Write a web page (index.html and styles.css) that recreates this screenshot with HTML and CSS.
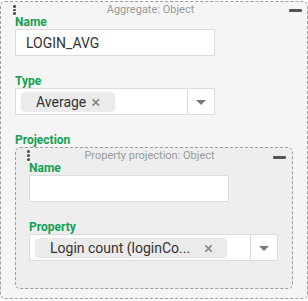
FILE: index.html
```html
<!DOCTYPE html>
<html lang="en">
<head>
    <meta charset="UTF-8">
    <meta name="viewport" content="width=device-width, initial-scale=1.0">
    <title>Aggregate</title>
    <link rel="stylesheet" href="styles.css">
</head>
<body>
    <div class="group">
        <div class="group-head">
            <span class="handle"><i></i><i></i><i></i></span>
            <span class="group-title">Aggregate: Object</span>
            <span class="collapse"></span>
        </div>

        <div class="field">
            <label class="field-label">Name</label>
            <input class="text-input" type="text" value="LOGIN_AVG">
        </div>

        <div class="field">
            <label class="field-label">Type</label>
            <div class="select select-type">
                <div class="select-value">
                    <span class="chip">Average<span class="chip-remove">×</span></span>
                </div>
                <div class="select-arrow"><span class="caret"></span></div>
            </div>
        </div>

        <div class="field field-nested">
            <label class="field-label">Projection</label>
            <!-- vnořený blok projekce -->
            <div class="group group-inner">
                <div class="group-head">
                    <span class="handle"><i></i><i></i><i></i></span>
                    <span class="group-title">Property projection: Object</span>
                    <span class="collapse"></span>
                </div>

                <div class="field">
                    <label class="field-label">Name</label>
                    <input class="text-input" type="text" value="">
                </div>

                <div class="field">
                    <label class="field-label">Property</label>
                    <div class="select select-property">
                        <div class="select-value">
                            <span class="chip chip-wide"><span class="chip-text">Login count (loginCo...</span><span class="chip-remove">×</span></span>
                        </div>
                        <div class="select-arrow"><span class="caret"></span></div>
                    </div>
                </div>
            </div>
        </div>
    </div>
</body>
</html>
```

FILE: styles.css
```css
body {
    margin: 0;
    padding-top: 1px;
    background: #fff;
    font-family: Roboto, "Liberation Sans", Arial, sans-serif;
    color: #333;
}

.group {
    border: 1px dashed #9e9e9e;
    border-radius: 5px;
    background: #f5f5f5;
    padding: 0 14px 9px 14px;
}

.group-inner {
    background: #eeeeee;
    padding: 0 13px 9px 13px;
}

.group-head {
    display: flex;
    height: 13px;
    margin-right: -9px;
}

.group-inner .group-head {
    margin-right: -7px;
}

.handle {
    display: flex;
    flex-direction: column;
    gap: 1px;
    margin: 3px 0 0 -2px;
    position: relative;
    z-index: 1;
}

.group-inner .handle {
    margin-top: 2px;
}

.handle i {
    display: block;
    width: 3px;
    height: 3px;
    border-radius: 50%;
    background: #4a4a4a;
}

.group-title {
    flex: 1;
    text-align: center;
    font-size: 11px;
    line-height: 16px;
    color: #9a9a9a;
    margin-right: 4px;
}

.collapse {
    width: 13px;
    height: 3px;
    margin-top: 7px;
    background: #555;
    border-radius: 1px;
}

.group-inner .collapse {
    margin-top: 8px;
}

.field {
    margin-bottom: 18px;
}

.field-nested {
    margin-bottom: 0;
}

.field-label {
    display: block;
    font-size: 12px;
    font-weight: bold;
    line-height: 14px;
    color: #12a150;
}

.text-input {
    display: block;
    box-sizing: border-box;
    width: 200px;
    height: 27px;
    margin: 0;
    padding: 0 10px;
    border: 1px solid #dcdcdc;
    background: #fff;
    font-family: Roboto, "Liberation Sans", Arial, sans-serif;
    font-size: 14px;
    color: #333;
    outline: none;
}

.select {
    display: flex;
    box-sizing: border-box;
    height: 27px;
    border: 1px solid #dcdcdc;
    background: #fff;
}

.select-type {
    width: 200px;
}

.select-property {
    width: 249px;
}

.select-value {
    flex: 1;
    display: flex;
    align-items: center;
    padding: 0 5px;
}

.chip {
    display: flex;
    align-items: center;
    height: 20px;
    padding: 0 15px 0 15px;
    border-radius: 4px;
    background: #ebebeb;
    font-size: 14px;
    color: #333;
    white-space: nowrap;
}

.chip-wide {
    width: 192px;
    box-sizing: border-box;
    padding-right: 14px;
}

.chip-text {
    flex: 1;
}

.chip-remove {
    margin-left: 5px;
    font-size: 17px;
    line-height: 20px;
    color: #808080;
}

.select-arrow {
    width: 26px;
    border-left: 1px solid #dcdcdc;
    display: flex;
    align-items: center;
    justify-content: center;
}

.caret {
    width: 0;
    height: 0;
    border-left: 5px solid transparent;
    border-right: 5px solid transparent;
    border-top: 5px solid #7a7a7a;
    margin-top: 1px;
}
```
